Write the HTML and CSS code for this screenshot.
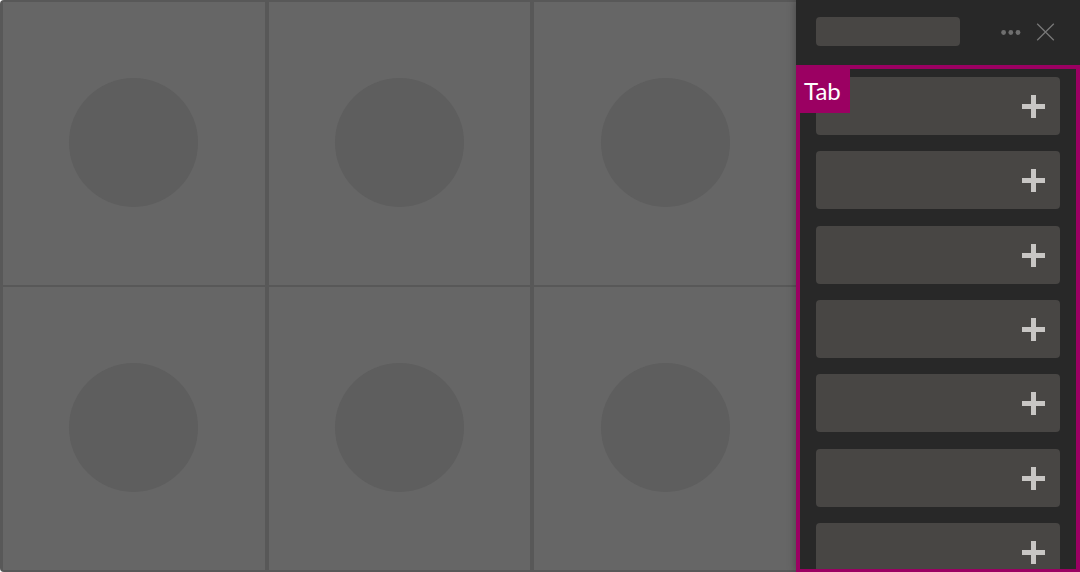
FILE: index.html
```html
<!DOCTYPE html>
<html lang="en">
<head>
<meta charset="utf-8">
<meta name="viewport" content="width=device-width, initial-scale=1">
<title>Gallery with side panel</title>
<link rel="stylesheet" href="styles.css">
</head>
<body>
<div class="app">
  <main class="gallery">
    <div class="tile"><span class="avatar"></span></div>
    <div class="tile"><span class="avatar"></span></div>
    <div class="tile"><span class="avatar"></span></div>
    <div class="tile"><span class="avatar"></span></div>
    <div class="tile"><span class="avatar"></span></div>
    <div class="tile"><span class="avatar"></span></div>
  </main>
  <aside class="panel">
    <header class="panel-header">
      <span class="title-placeholder"></span>
      <button class="icon-button" type="button" aria-label="More options">
        <svg width="20" height="20" viewBox="0 0 20 20" fill="#6f6f6f"><circle cx="2.6" cy="10.5" r="2.4"/><circle cx="9.8" cy="10.5" r="2.4"/><circle cx="17" cy="10.5" r="2.4"/></svg>
      </button>
      <button class="icon-button" type="button" aria-label="Close">
        <svg width="20" height="20" viewBox="0 0 20 20" fill="none" stroke="#777" stroke-width="1.3"><path d="M1.2 1.7 17.8 18.3M17.8 1.7 1.2 18.3"/></svg>
      </button>
    </header>
    <section class="tab">
      <span class="tab-label">Tab</span>
      <ul class="list">
        <li class="item"><button class="add" type="button" aria-label="Add item 1"></button></li>
        <li class="item"><button class="add" type="button" aria-label="Add item 2"></button></li>
        <li class="item"><button class="add" type="button" aria-label="Add item 3"></button></li>
        <li class="item"><button class="add" type="button" aria-label="Add item 4"></button></li>
        <li class="item"><button class="add" type="button" aria-label="Add item 5"></button></li>
        <li class="item"><button class="add" type="button" aria-label="Add item 6"></button></li>
        <li class="item"><button class="add" type="button" aria-label="Add item 7"></button></li>
      </ul>
    </section>
  </aside>
</div>
</body>
</html>
```
FILE: styles.css
```css
* {
  box-sizing: border-box;
}

body {
  margin: 0;
  background: #fff;
  font-family: Lato, "Open Sans", sans-serif;
}

button {
  padding: 0;
  border: 0;
  background: none;
  cursor: pointer;
}

.app {
  display: flex;
  height: 100vh;
  overflow: hidden;
}

.gallery {
  flex: 1;
  display: grid;
  grid-template-columns: repeat(3, 1fr);
  grid-template-rows: repeat(2, 1fr);
  gap: 2px 4px;
  padding: 2px 0 2px 3px;
  background: #585858;
  border-radius: 4px 0 0 4px;
}

.tile {
  display: flex;
  align-items: center;
  justify-content: center;
  padding-bottom: 2px;
  background: #666;
}

.avatar {
  width: 129px;
  height: 129px;
  border-radius: 50%;
  background: #5e5e5e;
}

.panel {
  position: relative;
  width: 284px;
  display: flex;
  flex-direction: column;
  background: #282828;
  box-shadow: 0 0 8px rgba(0, 0, 0, 0.35);
}

.panel-header {
  display: flex;
  align-items: center;
  gap: 15px;
  height: 65px;
  padding: 0 24px 2px 20px;
}

.title-placeholder {
  width: 144px;
  height: 29px;
  margin-right: auto;
  border-radius: 4px;
  background: #484644;
}

.icon-button {
  height: 20px;
}

.icon-button svg {
  display: block;
}

.tab {
  position: relative;
  flex: 1;
  min-height: 0;
  border: 4px solid #9b0062;
  border-bottom-width: 3px;
  overflow: hidden;
}

.tab-label {
  position: absolute;
  top: 0;
  left: 0;
  width: 50px;
  padding: 0 4px;
  background: #9b0062;
  color: #fff;
  font-size: 24px;
  line-height: 44px;
}

.list {
  display: flex;
  flex-direction: column;
  justify-content: space-between;
  height: calc(100% + 12px);
  margin: 0;
  padding: 8px 16px 0;
  list-style: none;
}

.item {
  display: flex;
  align-items: center;
  justify-content: flex-end;
  height: 58px;
  padding: 1px 15px 0;
  border-radius: 4px;
  background: #484644;
}

.add {
  width: 23px;
  height: 23px;
  background:
    linear-gradient(#c8c6c4, #c8c6c4) center / 5px 100% no-repeat,
    linear-gradient(#c8c6c4, #c8c6c4) center / 100% 5px no-repeat;
}
```
